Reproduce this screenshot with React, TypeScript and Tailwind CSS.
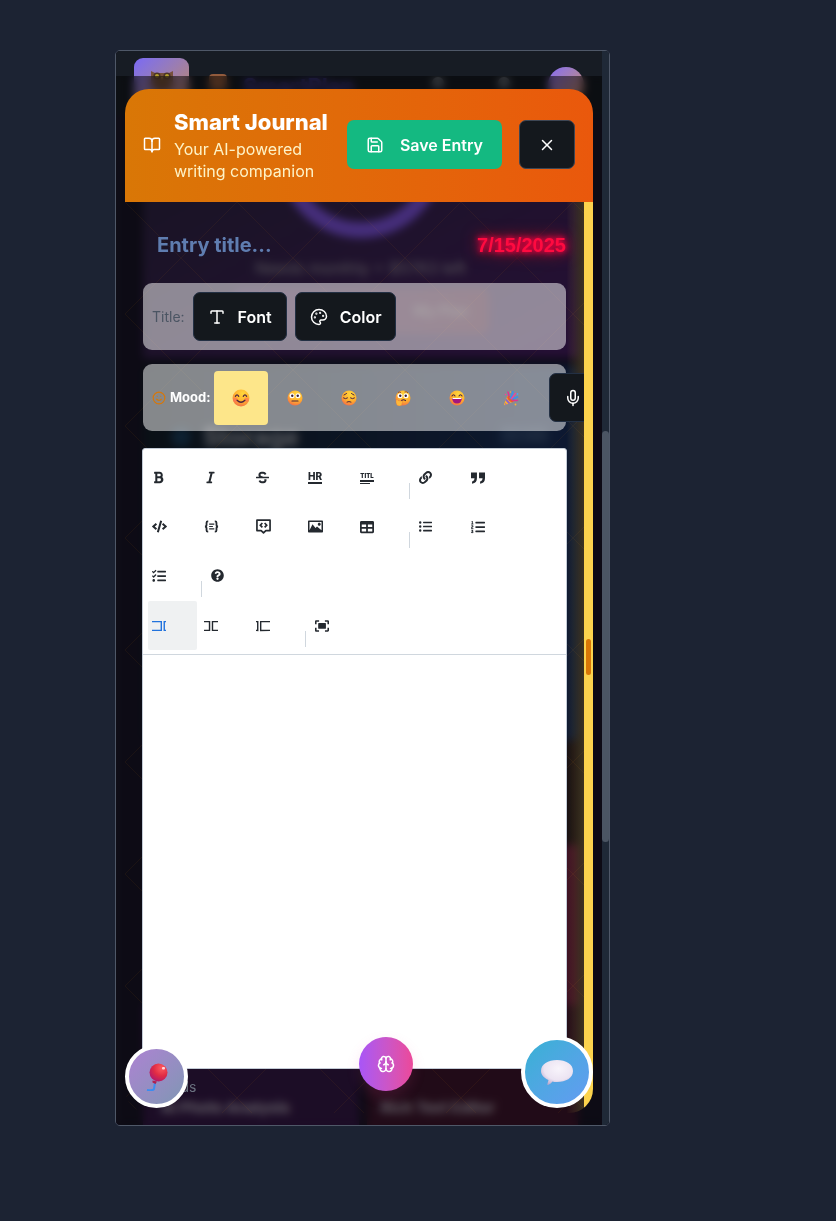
import React from 'react';
import { BookOpen, Brain, Mic, Palette, Save, Smile, Type, X } from 'lucide-react';
import {
  FaBold,
  FaCode,
  FaItalic,
  FaLink,
  FaListOl,
  FaListUl,
  FaQuestionCircle,
  FaStrikethrough,
  FaTable,
  FaTasks,
} from 'react-icons/fa';

function EmojiDefs() {
  return (
    <svg width="0" height="0" className="absolute" aria-hidden="true">
      <defs>
        <radialGradient id="face" cx="0.6" cy="0.25" r="0.85">
          <stop offset="0" stopColor="#ffd83d" />
          <stop offset="0.55" stopColor="#ffb02e" />
          <stop offset="1" stopColor="#f0604d" />
        </radialGradient>
        <radialGradient id="balloon" cx="0.68" cy="0.25" r="0.8">
          <stop offset="0" stopColor="#ff5a5f" />
          <stop offset="0.55" stopColor="#e02c44" />
          <stop offset="1" stopColor="#b3196b" />
        </radialGradient>
        <radialGradient id="bubble" cx="0.55" cy="0.35" r="0.7">
          <stop offset="0" stopColor="#f8f4fb" />
          <stop offset="0.65" stopColor="#ece4f2" />
          <stop offset="1" stopColor="#b9a6cc" />
        </radialGradient>
        <pattern id="lattice" width="112" height="112" patternUnits="userSpaceOnUse">
          <path d="M0 0L112 112M112 0L0 112" stroke="#f59e0b" strokeOpacity="0.06" fill="none" />
        </pattern>
      </defs>
    </svg>
  );
}

type Mood = 'happy' | 'neutral' | 'sad' | 'thinking' | 'excited' | 'party';

function MoodFace({ mood, className }: { mood: Mood; className: string }) {
  if (mood === 'party') {
    return (
      <svg viewBox="0 0 32 32" className={className} aria-hidden="true">
        <path d="M9 12L2 28Q2 31 5 30L21 23Z" fill="#ffb02e" />
        <path d="M7 17L15 26L11 28L5 21ZM3 25L8 29L5 30Z" fill="#8d65c5" />
        <ellipse cx="15" cy="18" rx="4" ry="8" transform="rotate(-45 15 18)" fill="#ea5a2a" />
        <path d="M14 17C19 13 18 8 20 2M17 19C22 16 25 17 30 13" fill="none" stroke="#3f8fe8" strokeWidth="4" />
        <path d="M11 13C14 9 9 6 10 3M18 21C22 19 26 23 30 20" fill="none" stroke="#e0338f" strokeWidth="3" />
        <path d="M16 18C22 13 21 10 26 6" fill="none" stroke="#f0439c" strokeWidth="3" />
        <circle cx="5" cy="9" r="1.6" fill="#f0439c" />
        <circle cx="29" cy="8" r="1.8" fill="#44a7f5" />
        <circle cx="25" cy="29" r="1.8" fill="#ffb02e" />
        <circle cx="15" cy="4" r="1.4" fill="#ffb02e" />
      </svg>
    );
  }
  return (
    <svg viewBox="0 0 32 32" className={className} aria-hidden="true">
      <circle cx="16" cy="16" r="15" fill="url(#face)" />
      {mood === 'happy' && (
        <>
          <circle cx="6" cy="19" r="4" fill="#ff6b5a" fillOpacity="0.6" />
          <circle cx="26" cy="19" r="4" fill="#ff6b5a" fillOpacity="0.6" />
          <path
            d="M6 13Q9 8 12 13M20 13Q23 8 26 13M9 20Q16 27 23 20"
            fill="none"
            stroke="#4a2340"
            strokeWidth="2.2"
            strokeLinecap="round"
          />
        </>
      )}
      {(mood === 'neutral' || mood === 'thinking') && (
        <>
          <circle cx="10" cy="11.5" r="5" fill="#fff" />
          <circle cx="22" cy="11.5" r="5" fill="#fff" />
          <circle cx="10.5" cy="11.5" r="2.4" fill="#3a2038" />
          <circle cx="21.5" cy="11.5" r="2.4" fill="#3a2038" />
        </>
      )}
      {mood === 'neutral' && <path d="M10 22H22" stroke="#4a2340" strokeWidth="2.4" strokeLinecap="round" />}
      {mood === 'thinking' && (
        <>
          <path d="M6 5Q9 3 12 5M19 4Q23 2 26 6" stroke="#8a3b2a" strokeWidth="1.8" fill="none" />
          <path d="M13 21Q17 18 21 21" stroke="#4a2340" strokeWidth="2.4" fill="none" strokeLinecap="round" />
          <path
            d="M2 20Q4 17 6 21L14 22Q18 24 14 26Q16 31 9 32Q1 32 2 20Z"
            fill="#ffb83a"
            stroke="#e2703a"
            strokeWidth="0.8"
          />
        </>
      )}
      {mood === 'sad' && (
        <path
          d="M6 10Q8 9 11 7M21 7Q24 9 26 10M5 16Q9 19 13 16M19 16Q23 19 27 16M12 24Q16 22 20 24"
          fill="none"
          stroke="#4a2340"
          strokeWidth="2"
          strokeLinecap="round"
        />
      )}
      {mood === 'excited' && (
        <>
          <path
            d="M6 12Q9 7 12 12M20 12Q23 7 26 12"
            fill="none"
            stroke="#4a2340"
            strokeWidth="2.2"
            strokeLinecap="round"
          />
          <path d="M6 16H26Q25 27 16 27Q7 27 6 16Z" fill="#a3157f" />
          <path d="M7 16H25V17Q25 18 24 18H8Q7 18 7 17Z" fill="#fff" />
        </>
      )}
    </svg>
  );
}

const moods: { id: Mood; label: string }[] = [
  { id: 'happy', label: 'Happy' },
  { id: 'neutral', label: 'Neutral' },
  { id: 'sad', label: 'Sad' },
  { id: 'thinking', label: 'Thinking' },
  { id: 'excited', label: 'Excited' },
  { id: 'party', label: 'Celebrating' },
];

function HrIcon() {
  return (
    <span className="flex h-3 w-[14px] flex-col items-center justify-between border-b-2 border-[#24292f] text-[10px] leading-[9px] font-extrabold">
      HR
    </span>
  );
}

function TitleIcon() {
  return (
    <span className="flex flex-col text-[6px] leading-[8px] font-black">
      TITL
      <span className="h-[2px] w-[14px] bg-[#24292f]" />
      <span className="mt-px h-px w-[10px] bg-[#24292f]" />
    </span>
  );
}

function CodeBlockIcon() {
  return (
    <svg viewBox="0 0 16 16" className="size-[15px]" fill="none" stroke="currentColor" aria-hidden="true">
      <path d="M4.5 2.5H4Q2.7 2.5 2.7 4V6Q2.7 8 1 8Q2.7 8 2.7 10V12Q2.7 13.5 4 13.5H4.5M11.5 2.5H12Q13.3 2.5 13.3 4V6Q13.3 8 15 8Q13.3 8 13.3 10V12Q13.3 13.5 12 13.5H11.5" strokeWidth="1.9" />
      <path d="M5.5 5.5H11M5.5 8H9.5M5.5 10.5H11" strokeWidth="1.2" />
    </svg>
  );
}

function CommentIcon() {
  return (
    <svg viewBox="0 0 16 16" className="size-[15px]" fill="none" stroke="currentColor" aria-hidden="true">
      <path d="M1 1.2H15V12.3H10.5L8 14.7L5.5 12.3H1Z" strokeWidth="1.8" strokeLinejoin="round" />
      <path d="M6.8 4.3L4.6 6.6L6.8 8.9M9.2 4.3L11.4 6.6L9.2 8.9" strokeWidth="1.8" />
    </svg>
  );
}

function ImageIcon() {
  return (
    <svg viewBox="0 0 20 20" className="size-[15px]" fill="currentColor" aria-hidden="true">
      <path d="M15 9c1.1 0 2-.9 2-2s-.9-2-2-2-2 .9-2 2 .9 2 2 2zm4-7H1c-.55 0-1 .45-1 1v14c0 .55.45 1 1 1h18c.55 0 1-.45 1-1V3c0-.55-.45-1-1-1zm-1 13l-6-5-2 2-4-5-4 8V4h16v11z" />
    </svg>
  );
}

function QuoteIcon() {
  return (
    <svg viewBox="0 0 20 20" className="size-[14px]" fill="currentColor" aria-hidden="true">
      <path d="M0 2H8.5V10C8.5 14.5 6.5 17.5 1.5 18.3V15C4 14.3 5 12.8 5 10.5H0ZM11.5 2H20V10C20 14.5 18 17.5 13 18.3V15C15.500 14.3 16.500 12.8 16.500 10.500H11.500Z" />
    </svg>
  );
}

function PaneIcon({ left, right }: { left: string; right: string }) {
  return (
    <svg viewBox="0 0 520 520" className="size-[14px]" fill="currentColor" aria-hidden="true">
      <polygon points={left} />
      <polygon points={right} />
    </svg>
  );
}

function FullscreenIcon() {
  return (
    <svg viewBox="0 0 520 520" className="size-[14px]" fill="currentColor" aria-hidden="true">
      <path d="M118 171.133334L118 342.200271C118 353.766938 126.675 365.333605 141.133333 365.333605L382.634614 365.333605C394.201281 365.333605 405.767948 356.658605 405.767948 342.200271L405.767948 171.133334C405.767948 159.566667 397.092948 148 382.634614 148L141.133333 148C126.674999 148 117.999999 156.675 118 171.133334zM465.353591 413.444444L370 413.444444L370 471.222222L474.0221 471.222222C500.027624 471.222222 520.254143 451 520.254143 425L520.254143 321L462.464089 321L462.464089 413.444444L465.353591 413.444444zM471.0221 43L367 43L367 100.777778L462.353591 100.777778L462.353591 196.111111L520.143647 196.111111L520.143647 89.2222219C517.254144 63.2222219 497.027624 43 471.0221 43zM57.7900547 100.777778L153.143646 100.777778L153.143646 43L46.2320439 43C20.2265191 43 0 63.2222219 0 89.2222219L0 193.222222L57.7900547 193.222222L57.7900547 100.777778zM57.7900547 321L0 321L0 425C0 451 20.2265191 471.222223 46.2320439 471.222223L150.254143 471.222223L150.254143 413.444445L57.7900547 413.444445L57.7900547 321z" />
    </svg>
  );
}

type Tool = { label: string; icon: React.ReactNode; active?: boolean } | null;

const editTools: Tool[] = [
  { label: 'Bold', icon: <FaBold className="size-[13px]" /> },
  { label: 'Italic', icon: <FaItalic className="size-[13px]" /> },
  { label: 'Strikethrough', icon: <FaStrikethrough className="size-[13px]" /> },
  { label: 'Horizontal rule', icon: <HrIcon /> },
  { label: 'Title', icon: <TitleIcon /> },
  null,
  { label: 'Link', icon: <FaLink className="size-[13px]" /> },
  { label: 'Quote', icon: <QuoteIcon /> },
  { label: 'Code', icon: <FaCode className="size-[15px]" /> },
  { label: 'Code block', icon: <CodeBlockIcon /> },
  { label: 'Comment', icon: <CommentIcon /> },
  { label: 'Image', icon: <ImageIcon /> },
  { label: 'Table', icon: <FaTable className="size-[14px]" /> },
  null,
  { label: 'Unordered list', icon: <FaListUl className="size-[13px]" /> },
  { label: 'Ordered list', icon: <FaListOl className="size-[14px]" /> },
  { label: 'Checklist', icon: <FaTasks className="size-[14px]" /> },
  null,
  { label: 'Help', icon: <FaQuestionCircle className="size-[13px]" /> },
];

const viewTools: Tool[] = [
  {
    label: 'Edit',
    active: true,
    icon: (
      <PaneIcon
        left="0 71.293 0 122 319 122 319 397 0 397 0 449.707 372 449.413 372 71.293"
        right="429 71.293 520 71.293 520 122 481 123 481 396 520 396 520 449.707 429 449.413"
      />
    ),
  },
  {
    label: 'Live',
    icon: (
      <PaneIcon
        left="0 71.293 0 122 179 122 179 397 0 397 0 449.707 232 449.413 232 71.293"
        right="289 71.293 520 71.293 520 122 341 123 341 396 520 396 520 449.707 289 449.413"
      />
    ),
  },
  {
    label: 'Preview',
    icon: (
      <PaneIcon
        left="0 71.293 0 122 38.023 123 38.023 398 0 397 0 449.707 91.023 450.413 91.023 72.293"
        right="148.023 72.293 520 71.293 520 122 200.023 124 200.023 397 520 396 520 449.707 148.023 450.413"
      />
    ),
  },
  null,
  { label: 'Fullscreen', icon: <FullscreenIcon /> },
];

function ToolRow({ tools }: { tools: Tool[] }) {
  return (
    <ul className="flex flex-wrap gap-x-[3px]">
      {tools.map((tool, i) =>
        tool === null ? (
          <li key={i} className="mr-[2px] ml-px mt-[30px] h-4 w-px bg-[#d0d7de]" />
        ) : (
          <li key={i}>
            <button
              type="button"
              aria-label={tool.label}
              className={
                tool.active
                  ? 'flex h-[49px] w-[49px] items-center rounded-[2px] bg-[#eff1f2] px-1 text-[#2273dd]'
                  : 'flex h-[49px] w-[49px] items-center rounded-[2px] px-1 text-[#24292f]'
              }
            >
              {tool.icon}
            </button>
          </li>
        ),
      )}
    </ul>
  );
}

function Backdrop() {
  return (
    <div className="absolute inset-0 overflow-hidden rounded-[4px] bg-[#1a162a]" aria-hidden="true">
      <div className="flex h-full flex-col">
        <div className="flex h-[64px] shrink-0 items-start bg-[#171c24] pr-[25px] pl-[18px]">
          <div className="mt-[7px] flex h-[55px] w-[55px] justify-center rounded-[9px] bg-linear-to-br from-[#7b68f5] to-[#c88348] pt-[11px]">
            <svg viewBox="0 0 24 24" className="size-6">
              <path d="M1 2L5 4H19L23 2V14Q23 24 12 24Q1 24 1 14Z" fill="#77503d" />
              <circle cx="7" cy="7" r="3.600" fill="#4a3328" />
              <circle cx="17" cy="7" r="3.600" fill="#4a3328" />
              <circle cx="7" cy="7" r="2" fill="#b5a02c" />
              <circle cx="17" cy="7" r="2" fill="#b5a02c" />
              <path d="M11 8H13L12 12Z" fill="#e0a34a" />
            </svg>
          </div>
          <div className="mt-[23px] ml-5 h-[18px] w-[18px] rounded-[4px] bg-[#925b3d]" />
          <div className="mt-[19px] ml-4 text-[22px] leading-8 font-bold text-[#4b3fa0]">SmartPlan</div>
          <div className="mt-[26px] ml-auto h-3 w-3 rounded-full bg-[#6b7079]" />
          <div className="mt-[26px] ml-[54px] h-3 w-3 rounded-full bg-[#6b7079]" />
          <div className="mt-[16px] ml-[38px] h-9 w-9 rounded-full bg-linear-to-br from-[#8568f5] to-[#d58a48]" />
        </div>
        <div className="mr-[31px] ml-[27px] flex h-[243px] shrink-0 flex-col items-center overflow-hidden bg-linear-to-br from-[#2e2844] to-[#4c1e6c]">
          <div className="-mt-[43px] h-[166px] w-[166px] shrink-0 rounded-full border-16 border-[#8b5cf6]" />
          <div className="mt-[18px] text-[16px] leading-6 text-[#aaa4b0]">Needs monthly = $5763 left</div>
          <div className="mt-[8px] flex h-[46px] w-[256px] shrink-0 items-center justify-end rounded-lg bg-linear-to-r from-[#5c2c78] to-[#6e2650] pr-5 text-sm font-bold text-[#9a8090]">
            My Plan
          </div>
        </div>
        <div className="mt-[7px] mr-[31px] ml-[27px] flex h-[376px] shrink-0 items-start justify-between rounded-lg bg-linear-to-r from-[#14202c] to-[#1b3264] px-[28px] pt-[56px]">
          <div className="flex items-center gap-3">
            <span className="h-5 w-5 rounded-full bg-[#1c4263]" />
            <span className="text-[25px] leading-8 font-bold text-[#b4b7c0]">Storage</span>
          </div>
          <span className="mt-1 rounded-md bg-[#26406e] px-1 text-sm text-[#51698f]">50 MB</span>
        </div>
        <div className="mr-[31px] ml-[27px] h-[104px] shrink-0 bg-linear-to-r from-[#1a162a] to-[#2c1c24]" />
        <div className="mr-[31px] ml-[27px] h-[160px] shrink-0 bg-linear-to-r from-[#1c1528] to-[#7a1e48]" />
        <div className="mr-[31px] ml-[27px] flex grow gap-2">
          <div className="flex-1 bg-[#391a4d] pl-[18px] text-[15px] font-bold text-[#c8c0d0]">
            <div className="mt-[92px]">AI Photo Analysis</div>
          </div>
          <div className="flex-1 bg-[#431731] pl-[14px] text-[15px] font-bold text-[#c8c0d0]">
            <div className="mt-[92px]">Rich Text Editor</div>
          </div>
        </div>
      </div>
      <div className="absolute inset-x-0 top-[25px] bottom-0 bg-black/50 backdrop-blur-[4px]" />
    </div>
  );
}

const darkButton =
  'flex h-[49px] shrink-0 items-center gap-3 rounded-[7px] border border-[#233044] bg-[#14181d] px-[14px] text-[16px] font-semibold text-white';

export default function App() {
  return (
    <main className="min-h-screen bg-[#1c2333] pt-[50px] pr-[226px] pb-[95px] pl-[115px] font-['Inter','Liberation_Sans',sans-serif]">
      <EmojiDefs />
      <div className="relative rounded-[5px] border border-[#4f5868] pt-[38px] pr-4 pb-3 pl-[9px]">
        <Backdrop />
        <div className="absolute top-0 right-0 bottom-0 w-[7px] rounded-r-[4px] bg-[#1f2937]">
          <div className="mt-[380px] h-[411px] w-[7px] rounded-[4px] bg-[#4b5563]" />
        </div>

        <section className="relative overflow-hidden rounded-[24px]" aria-label="Smart Journal">
          <header className="flex items-center bg-linear-to-r from-[#d97706] to-[#ea580c] px-[18px] pt-[18px] pb-5">
            <BookOpen size={18} className="shrink-0 text-white" />
            <div className="mr-[18px] ml-[13px] min-w-0 flex-1">
              <h1 className="text-[22px] leading-[31px] font-extrabold whitespace-nowrap text-white">Smart Journal</h1>
              <p className="text-[16px] leading-[22px] text-[#fef3c7]">Your AI-powered writing companion</p>
            </div>
            <button
              type="button"
              className="flex h-[49px] shrink-0 items-center gap-4 rounded-[7px] bg-[#14b981] px-[19px] text-[16px] font-semibold text-white"
            >
              <Save size={18} />
              Save Entry
            </button>
            <button
              type="button"
              aria-label="Close"
              className="ml-[17px] flex h-[49px] w-14 shrink-0 items-center justify-center rounded-[7px] border border-[#3d4654] bg-[#14181d] text-white"
            >
              <X size={18} />
            </button>
          </header>

          <div className="flex">
            <div className="relative min-w-0 flex-1 overflow-hidden px-[18px] pt-[18px] pb-4">
              <svg className="pointer-events-none absolute inset-0 h-full w-full" aria-hidden="true">
                <rect width="100%" height="100%" fill="url(#lattice)" />
              </svg>
              <div className="pointer-events-none absolute inset-y-0 right-0 w-[18px] bg-linear-to-r from-[#fcd34d]/0 to-[#fcd34d]/20" />

              <div className="relative">
                <div className="flex h-[50px] items-center">
                  <input
                    type="text"
                    aria-label="Entry title"
                    placeholder="Entry title..."
                    className="min-w-0 flex-1 bg-transparent px-[14px] text-[20px] font-bold text-white outline-none placeholder:text-[#5f7db0]"
                  />
                  <time className="font-['Liberation_Sans',Arial,sans-serif] text-[20px] font-bold text-[#ff0a40] [text-shadow:0_0_5px_#ff0040,0_0_10px_#ff0040,0_0_18px_#ff0040]">
                    7/15/2025
                  </time>
                </div>

                <div className="mt-[13px] flex h-[67px] items-center gap-2 rounded-[9px] bg-white/50 px-[9px]">
                  <span className="text-[14px] text-[#4b5563]">Title:</span>
                  <button type="button" className={darkButton}>
                    <Type size={18} />
                    Font
                  </button>
                  <button type="button" className={darkButton}>
                    <Palette size={18} />
                    Color
                  </button>
                </div>

                <div className="mt-[14px] flex h-[67px] items-center rounded-[9px] bg-white/50 pl-[9px]">
                  <Smile size={14} className="shrink-0 text-[#d97706]" />
                  <span className="mr-[3px] ml-1 text-[13px] font-bold text-white">Mood:</span>
                  {moods.map((mood) => (
                    <button
                      key={mood.id}
                      type="button"
                      aria-label={mood.label}
                      aria-pressed={mood.id === 'happy'}
                      className={
                        mood.id === 'happy'
                          ? 'flex h-[54px] w-[54px] shrink-0 items-center justify-center rounded-[4px] bg-[#fde68a]'
                          : 'flex h-[54px] w-[54px] shrink-0 items-center justify-center'
                      }
                    >
                      <MoodFace mood={mood.id} className={mood.id === 'happy' ? 'size-[18px]' : 'size-4'} />
                    </button>
                  ))}
                  <button type="button" aria-label="Dictate" className={`ml-[11px] ${darkButton}`}>
                    <Mic size={18} />
                  </button>
                </div>

                <div className="-mx-px mt-[17px] flex min-h-[621px] flex-col rounded-[3px] border border-[#c3cbd6] bg-white">
                  <div className="border-b border-[#d0d7de] px-[5px] py-1">
                    <ToolRow tools={editTools} />
                    <div className="mt-px">
                      <ToolRow tools={viewTools} />
                    </div>
                  </div>
                  <textarea
                    aria-label="Journal entry"
                    className="w-full flex-1 resize-none bg-transparent p-[10px] text-[14px] text-[#24292f] outline-none"
                  />
                </div>
                <p className="mt-2 text-[14px] leading-5 text-[#6b7280]">0 words</p>
              </div>
            </div>
            <div className="w-[9px] shrink-0 bg-[#fcd34d]">
              <div className="mt-[437px] ml-[2px] h-9 w-[5px] rounded-full bg-[#d97706]" />
            </div>
          </div>
        </section>

        <button
          type="button"
          aria-label="Celebrate"
          className="absolute bottom-[17px] left-[9px] flex h-[63px] w-[63px] items-center justify-center rounded-full border-4 border-white bg-linear-to-br from-[#ac82d2] to-[#7f96b4]"
        >
          <svg viewBox="0 0 28 28" className="size-7" aria-hidden="true">
            <path d="M12 19.500L11 26Q10 28 4 27" fill="none" stroke="#3b8df0" strokeWidth="2" />
            <circle cx="15.500" cy="9.500" r="9" fill="url(#balloon)" />
            <path d="M9.500 17.500L14 18.500L12.500 21L9.500 19.500Z" fill="#b0204e" />
            <rect x="19" y="4" width="3" height="2.500" rx="1" fill="#ffd9dc" />
          </svg>
        </button>
        <button
          type="button"
          aria-label="AI assistant"
          className="absolute bottom-[34px] left-[243px] flex h-[54px] w-[54px] items-center justify-center rounded-full bg-linear-to-r from-[#a855f7] to-[#ec4899] text-white shadow-[0_6px_14px_rgba(236,72,153,0.15)]"
        >
          <Brain size={18} />
        </button>
        <button
          type="button"
          aria-label="Open chat"
          className="absolute right-4 bottom-[17px] flex h-[72px] w-[72px] items-center justify-center rounded-full border-4 border-white bg-linear-to-br from-[#36b1d4] to-[#629bf2]"
        >
          <svg viewBox="0 0 32 28" className="h-7 w-8" aria-hidden="true">
            <path
              d="M16 2C25 2 32 6 32 13C32 20 25 24 16 24C14 24 12.500 24 11.500 23.500Q10 25.500 7 27Q6 27 6.500 25.500L7.500 22C3 20 0 17 0 13C0 6 7 2 16 2Z"
              fill="url(#bubble)"
            />
          </svg>
        </button>
      </div>
    </main>
  );
}
